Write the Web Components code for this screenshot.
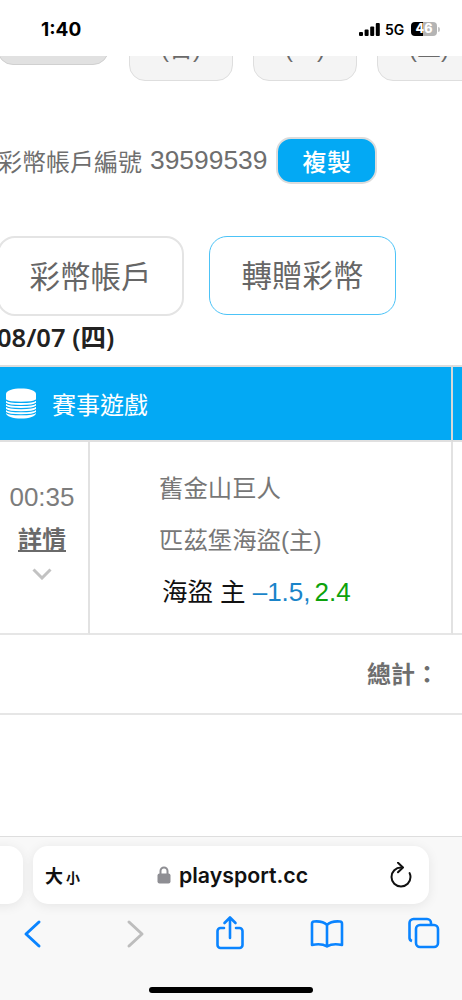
<!DOCTYPE html>
<html lang="zh-Hant">
<head>
<meta charset="utf-8">
<title>playsport.cc</title>
<style>
html,body{margin:0;padding:0;background:#fff}
body{width:462px;height:1000px;overflow:hidden;font-family:"Liberation Sans","Noto Sans CJK TC",sans-serif}
</style>
</head>
<body>
<phone-page>
  <status-bar slot="top"></status-bar>
  <day-strip>
    <day-tab></day-tab>
    <day-tab>(日)</day-tab>
    <day-tab>(一)</day-tab>
    <day-tab>(二)</day-tab>
  </day-strip>
  <account-line number="39599539"></account-line>
  <action-tabs></action-tabs>
  <game-table date="08/07 (四)"></game-table>
  <safari-bar slot="bottom"></safari-bar>
</phone-page>

<script>
// helper, all of them are the same: style + markup in an open shadow root
class Base extends HTMLElement{
  connectedCallback(){
    if(this.shadowRoot) return;
    let shadowRoot=this.attachShadow({mode:'open'});
    shadowRoot.innerHTML=`<style>${this.css()}</style>${this.html()}`;
  }
  css(){return ':host{display:block}'}
  html(){return '<slot></slot>'}
}

class PhonePage extends Base{
  css(){return `
    :host{display:flex;flex-direction:column;width:462px;height:1000px;overflow:hidden;background:#fff}
    main{flex:1;min-height:0;overflow:hidden}
  `}
  html(){return `<slot name="top"></slot><main><slot></slot></main><slot name="bottom"></slot>`}
}
customElements.define('phone-page',PhonePage);

class StatusBar extends Base{
  css(){return `
    :host{display:flex;align-items:center;height:56px;padding:0 22px 0 41px;box-sizing:border-box;font-family:"Inter","Liberation Sans",sans-serif;color:#000;background:#fff}
    .time{font-size:19px;font-weight:700;margin-right:auto;margin-top:3px}
    svg{display:block}
    .net{font-size:14px;font-weight:600;margin:3px 7px 0 5px;letter-spacing:-.2px}
    .bat{position:relative;width:26px;height:14px;border-radius:4px;background:linear-gradient(90deg,#000 46%,#b4b4b4 46%);color:#fff;font-size:12.5px;font-weight:800;line-height:14px;text-align:center;margin-top:2px}
    .nub{width:2px;height:5px;background:#c4c4c4;border-radius:0 2px 2px 0;margin:2px 0 0 1px}
  `}
  html(){return `
    <span class="time">1:40</span>
    <svg width="21" height="13" viewBox="0 0 21 13" style="margin-top:2px" fill="#000">
      <rect x="0" y="9" width="4" height="4" rx="1"/><rect x="5.6" y="6.5" width="4" height="6.5" rx="1"/>
      <rect x="11.2" y="3.5" width="4" height="9.5" rx="1"/><rect x="16.8" y="0" width="4" height="13" rx="1"/>
    </svg>
    <span class="net">5G</span>
    <span class="bat">46</span><span class="nub"></span>
  `}
}
customElements.define('status-bar',StatusBar);

class DayStrip extends Base{
  css(){return `
    :host{display:flex;gap:20px;height:27px;margin-left:-3px;overflow:hidden;align-items:flex-start;width:600px}
  `}
}
customElements.define('day-strip',DayStrip);

class DayTab extends Base{
  css(){return `
    :host{display:flex;align-items:flex-end;justify-content:center;flex:none;box-sizing:border-box;width:104px;height:60px;margin-top:-35px;padding-bottom:16px;
      background:#f4f4f4;border:1.5px solid #dedede;border-radius:16px;color:#6a6a6a;font-size:24px;line-height:30px}
    :host(:first-child){width:112px;height:44px;background:#e1e1e1;border-color:#d0d0d0}
  `}
}
customElements.define('day-tab',DayTab);

class AccountLine extends Base{
  css(){return `
    :host{display:flex;align-items:center;height:46px;margin:54px 0 0 -2px;color:#6e6e6e;font-size:24px;white-space:nowrap}
    .num{font-size:26.4px;margin-left:8px}
    button{all:unset;box-sizing:border-box;display:flex;align-items:center;justify-content:center;width:101px;height:47px;margin-left:9px;
      background:#03a9f4;border:2px solid #dcdcdc;border-radius:15px;color:#fff;font-size:24px;font-weight:500;letter-spacing:.5px}
  `}
  html(){return `<span>彩幣帳戶編號</span><span class="num">${this.getAttribute('number')}</span><button>複製</button>`}
}
customElements.define('account-line',AccountLine);

class ActionTabs extends Base{
  css(){return `
    :host{display:flex;gap:25px;margin:53px 0 0 -3px}
    a{display:flex;align-items:center;justify-content:center;box-sizing:border-box;width:187px;height:80px;padding-bottom:3px;border:2.5px solid #e4e4e4;border-radius:18px;color:#666;font-size:30.5px}
    a.on{width:187px;height:79px;border:1.5px solid #4cc3f7}
  `}
  html(){return `<a>彩幣帳戶</a><a class="on">轉贈彩幣</a>`}
}
customElements.define('action-tabs',ActionTabs);

class GameTable extends Base{
  css(){return `
    :host{display:block;color:#777}
    .date{margin:3px 0 0 -3px;height:46px;line-height:36px;font-family:"Noto Sans","Noto Sans CJK TC",sans-serif;font-size:25.500px;font-weight:600;color:#222;white-space:nowrap}
    .grid{display:grid;grid-template-columns:90px 363px 9px}
    .head{grid-column:1/3;display:flex;align-items:center;gap:15px;height:73px;padding-left:5px;background:#03a9f4;color:#fff;font-size:24px;border-top:2px solid #ddd;border-bottom:2px solid #e0e0e0;border-right:2px solid #d8d8d8}
    .head-end{background:#03a9f4;border-top:2px solid #ddd;border-bottom:2px solid #e0e0e0}
    .when{display:flex;flex-direction:column;align-items:center;height:193px;box-sizing:border-box;padding:40px 4px 0 0;border-right:2px solid #e2e2e2;border-bottom:2px solid #e6e6e6}
    .time{font-size:26px;line-height:30px;color:#7c7c7c}
    .more{font-size:24px;font-weight:700;line-height:34px;margin-top:11px;color:#6a6a6a;text-decoration:underline;text-underline-offset:2px}
    .chev{display:block;margin-top:11px}
    .match{box-sizing:border-box;height:193px;padding:32px 0 0 69px;border-right:2px solid #e2e2e2;border-bottom:2px solid #e6e6e6;font-size:24.4px}
    .team{line-height:30px;height:52px;color:#777}
    .pick{margin:-3px 0 0 3px;line-height:34px;color:#111;font-size:25.5px;white-space:nowrap}
    .odd{font-size:26px}
    .blue{color:#1a84c9}.green{color:#0ca20c;margin-left:-3px}
    .row-end{border-bottom:2px solid #e6e6e6}
    .sum{grid-column:1/4;display:flex;align-items:center;justify-content:flex-end;box-sizing:border-box;height:80px;padding:0 23px 3px 0;border-bottom:2px solid #e6e6e6;font-size:24px;font-weight:700;color:#6e6e6e}
  `}
  html(){return `
    <div class="date">${this.getAttribute('date')}</div>
    <div class="grid">
      <div class="head"><coin-icon></coin-icon><span>賽事遊戲</span></div><div class="head-end"></div>
      <div class="when">
        <span class="time">00:35</span>
        <span class="more">詳情</span>
        <svg class="chev" width="20" height="12" viewBox="0 0 20 12"><path d="M1.5 1.5 10 10l8.500-8.500" fill="none" stroke="#c2c2c2" stroke-width="3"/></svg>
      </div>
      <div class="match">
        <div class="team">舊金山巨人</div>
        <div class="team">匹茲堡海盜(主)</div>
        <div class="pick">海盜 主 <span class="odd blue">–1.5,</span> <span class="odd green">2.4</span></div>
      </div>
      <div class="row-end"></div>
      <div class="sum">總計：</div>
    </div>
  `}
}
customElements.define('game-table',GameTable);

class CoinIcon extends Base{
  css(){return `:host{display:block;width:32px;height:31px;flex:none}svg{display:block}`}
  html(){
    let lines='';
    for(let y=12;y<=27;y+=3.1){
      lines+=`<path d="M1 ${y}c3 3.200 27 3.200 30 0" fill="none" stroke="#03a9f4" stroke-width="1.1"/>`;
    }
    return `<svg width="32" height="31" viewBox="0 0 32 31">
      <path d="M1 6C1 2.500 8 .5 16 .5S31 2.500 31 6v19c0 3.500-7 5.500-15 5.500S1 28.500 1 25z" fill="#fff"/>${lines}
    </svg>`
  }
}
customElements.define('coin-icon',CoinIcon);

class SafariBar extends Base{
  css(){return `
    :host{display:block;box-sizing:border-box;height:164px;background:#f8f8f8;border-top:1.5px solid #dedede;overflow:hidden}
    .pills{display:flex;gap:10px;margin:9px 0 0 -373px}
    .pill{flex:none;box-sizing:border-box;width:396px;height:58px;border-radius:15px;background:#fff;box-shadow:0 2px 12px rgba(0,0,0,.08)}
    .url{display:flex;align-items:center;padding:0 16px 0 12px;color:#111}
    .aa{display:flex;align-items:baseline;width:112px;font-family:"Noto Sans CJK TC",sans-serif;font-weight:700;font-size:18px;line-height:1}
    .aa small{font-size:14px;margin-left:3px}
    .host{font-family:"Inter","Liberation Sans",sans-serif;font-size:21.300px;font-weight:600;margin-left:8px;margin-right:auto}
    svg{display:block;flex:none}
    nav{display:grid;grid-template-columns:102px 95px 97px 97px 40px;padding-left:13px;margin-top:6px;height:48px;align-items:center}
    nav svg{width:40px;height:40px}
    .home{width:164px;height:6px;border-radius:3px;background:#000;margin:29px 0 0 149px}
  `}
  html(){
    let blue='#0a84ff';
    return `
    <div class="pills">
      <div class="pill"></div>
      <div class="pill url">
        <span class="aa">大<small>小</small></span>
        <svg width="14" height="18" viewBox="0 0 14 18"><path d="M3.500 8V5a3.500 3.500 0 0 1 7 0v3" fill="none" stroke="#8e8e93" stroke-width="2"/><rect x=".5" y="7.500" width="13" height="10" rx="2" fill="#8e8e93"/></svg>
        <span class="host">playsport.cc</span>
        <svg width="24" height="26" viewBox="0 0 24 26"><path d="M12 5.500A9.500 9.500 0 1 0 21.500 15c0-1.500-.3-2.700-.9-3.900" fill="none" stroke="#111" stroke-width="2" stroke-linecap="round"/><path d="M9 .8l5 4.700-5 4.700" fill="none" stroke="#111" stroke-width="2" stroke-linecap="round" stroke-linejoin="round"/></svg>
      </div>
    </div>
    <nav>
      <svg viewBox="0 0 40 40"><path d="M26 8 13 20l13 12" fill="none" stroke="${blue}" stroke-width="3" stroke-linecap="round" stroke-linejoin="round"/></svg>
      <svg viewBox="0 0 40 40"><path d="M14 8l13 12-13 12" fill="none" stroke="#bdbdbd" stroke-width="3" stroke-linecap="round" stroke-linejoin="round"/></svg>
      <svg viewBox="0 0 40 40"><g fill="none" stroke="${blue}" stroke-width="2.600" stroke-linecap="round" stroke-linejoin="round"><path d="M14 14h-3.500A3 3 0 0 0 7.500 17v14a3 3 0 0 0 3 3h19a3 3 0 0 0 3-3V17a3 3 0 0 0-3-3H26"/><path d="M20 24V4M14.500 9 20 3.500 25.500 9"/></g></svg>
      <svg viewBox="0 0 40 40"><g fill="none" stroke="${blue}" stroke-width="2.600" stroke-linecap="round" stroke-linejoin="round"><path d="M20 11c-3-3-7-4-13-3.500-1.200.1-2 1-2 2.200V31c5-1 11-1 15 1.500C24 30 30 30 35 31V9.700c0-1.200-.8-2.100-2-2.200C27 7 23 8 20 11zM20 11v21"/></g></svg>
      <svg viewBox="0 0 40 40"><g fill="none" stroke="${blue}" stroke-width="2.600" stroke-linejoin="round"><rect x="12" y="11" width="22" height="22" rx="4"/><path d="M8 27A3.500 3.500 0 0 1 5.500 24V9A4 4 0 0 1 9.500 5H23a4 4 0 0 1 4 4v2"/></g></svg>
    </nav>
    <div class="home"></div>
  `}
}
customElements.define('safari-bar',SafariBar);
</script>
</body>
</html>
